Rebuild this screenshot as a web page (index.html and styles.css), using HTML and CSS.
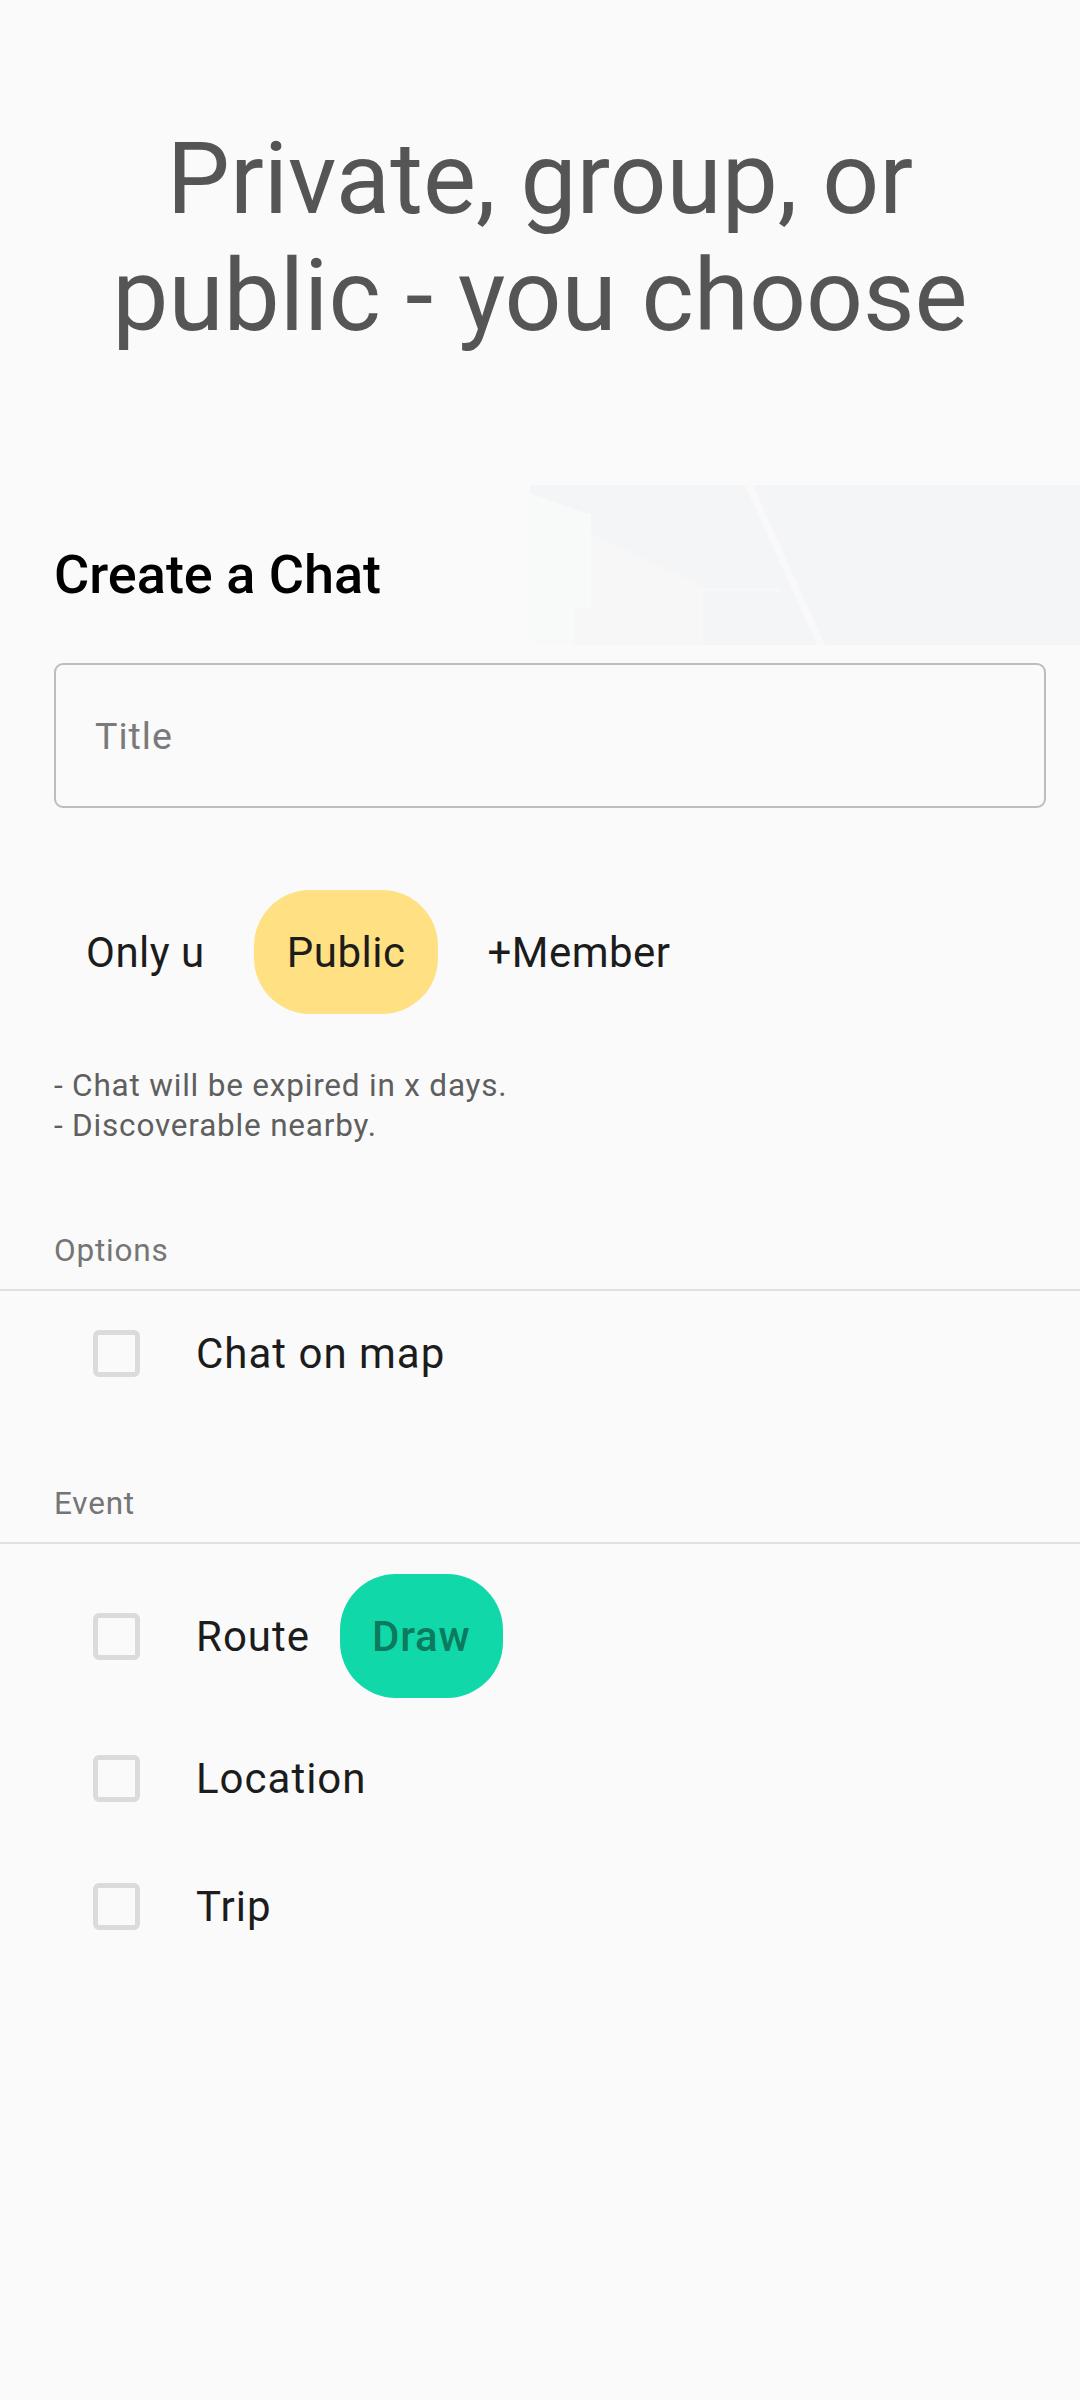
FILE: index.html
```html
<!DOCTYPE html>
<html lang="en">
<head>
  <meta charset="UTF-8" />
  <meta name="viewport" content="width=device-width, initial-scale=1.0"/>
  <title>Create a Chat</title>
  <link rel="stylesheet" href="styles.css">
</head>
<body>
  <header class="hero">
    <h1>Private, group, or<br>public - you choose</h1>
  </header>

  <main class="form">
    <div class="form-head">
      <h2>Create a Chat</h2>
    </div>

    <div class="field">
      <input type="text" id="chatTitle" placeholder="Title" />
    </div>

    <div class="chips">
      <button class="chip">Only u</button>
      <button class="chip selected">Public</button>
      <button class="chip">+Member</button>
    </div>

    <p class="hint">- Chat will be expired in x days.<br>- Discoverable nearby.</p>

    <section class="group group-options">
      <div class="group-label">Options</div>
      <label class="check-row">
        <span class="box"></span>
        <span class="check-text">Chat on map</span>
      </label>
    </section>

    <section class="group group-event">
      <div class="group-label">Event</div>
      <div class="check-row has-chip">
        <span class="box"></span>
        <span class="check-text">Route</span>
        <button class="chip draw">Draw</button>
      </div>
      <label class="check-row">
        <span class="box"></span>
        <span class="check-text">Location</span>
      </label>
      <label class="check-row">
        <span class="box"></span>
        <span class="check-text">Trip</span>
      </label>
    </section>
  </main>
</body>
</html>
```

FILE: styles.css
```css
body {
  margin: 0;
  background-color: #fafafa;
  font-family: Roboto, "Noto Sans", Arial, sans-serif;
  color: #1c1c1c;
}

.hero {
  padding: 120px 0 129px;
}

.hero h1 {
  margin: 0;
  font-size: 100px;
  font-weight: 400;
  line-height: 117px;
  text-align: center;
  color: #555555;
}

/* faint map picture behind the form title */
.form-head {
  padding: 61px 34px 41px 54px;
  background-color: #fafafa;
  background-image: url("data:image/svg+xml;utf8,<svg xmlns='http://www.w3.org/2000/svg' width='1080' height='164' viewBox='0 0 1080 164'><rect x='530' y='2' width='550' height='160' fill='%23f4f5f7'/><polygon points='530,10 585,30 591,30 591,125 574,125 574,162 530,162' fill='%23f8f9f9'/><polygon points='591,50 703,104 703,162 574,162 574,125 591,125' fill='%23f7f7f8'/><line x1='703' y1='107' x2='780' y2='107' stroke='%23f8f8f8' stroke-width='3'/><line x1='748' y1='0' x2='822' y2='164' stroke='%23f9f9fa' stroke-width='7'/></svg>");
  background-repeat: no-repeat;
  background-position: 0 0;
}

.form-head h2 {
  margin: 0;
  font-size: 54px;
  font-weight: 500;
  line-height: 62px;
  color: #000;
}

.field {
  padding: 16px 34px 0 54px;
}

.field input {
  box-sizing: border-box;
  width: 100%;
  height: 145px;
  padding: 0 39px;
  font-family: inherit;
  font-size: 37.5px;
  letter-spacing: 1px;
  color: #1c1c1c;
  background: transparent;
  border: 2px solid #bdbdbd;
  border-radius: 9px;
  outline: none;
}

.field input::placeholder {
  color: #7a7a7a;
}

.chips {
  display: flex;
  gap: 16px;
  margin-top: 82px;
  padding-left: 53px;
}

.chip {
  height: 124px;
  padding: 0 33px;
  font-family: inherit;
  font-size: 42px;
  letter-spacing: 0.5px;
  color: #1c1c1c;
  background: transparent;
  border: none;
  border-radius: 56px;
}

.chip.selected {
  background-color: #ffe083;
}

.hint {
  margin: 52px 0 0;
  padding-left: 54px;
  font-size: 31.5px;
  line-height: 40px;
  letter-spacing: 0.8px;
  color: #5f5f5f;
}

.group-label {
  padding: 0 0 18px 54px;
  font-size: 31.5px;
  line-height: 40px;
  letter-spacing: 0.8px;
  color: #757575;
  border-bottom: 2px solid #e0e0e0;
}

.group-options {
  margin-top: 85px;
}

.group-event {
  margin-top: 69px;
}

.check-row {
  display: flex;
  align-items: center;
  min-height: 128px;
  padding-left: 93px;
}

.group-options .check-row {
  min-height: 124px;
}

.check-row.has-chip {
  min-height: 0;
  padding-top: 30px;
  padding-bottom: 16px;
}

.box {
  box-sizing: border-box;
  width: 47px;
  height: 47px;
  margin-right: 56px;
  border: 5px solid #dddbd9;
  border-radius: 6px;
}

.check-text {
  font-size: 42px;
  letter-spacing: 1px;
  color: #1c1c1c;
}

.chip.draw {
  margin-left: 30px;
  padding: 0 32px;
  font-weight: 500;
  letter-spacing: 0.8px;
  color: #0b7a5e;
  background-color: #11d8a9;
}
```
